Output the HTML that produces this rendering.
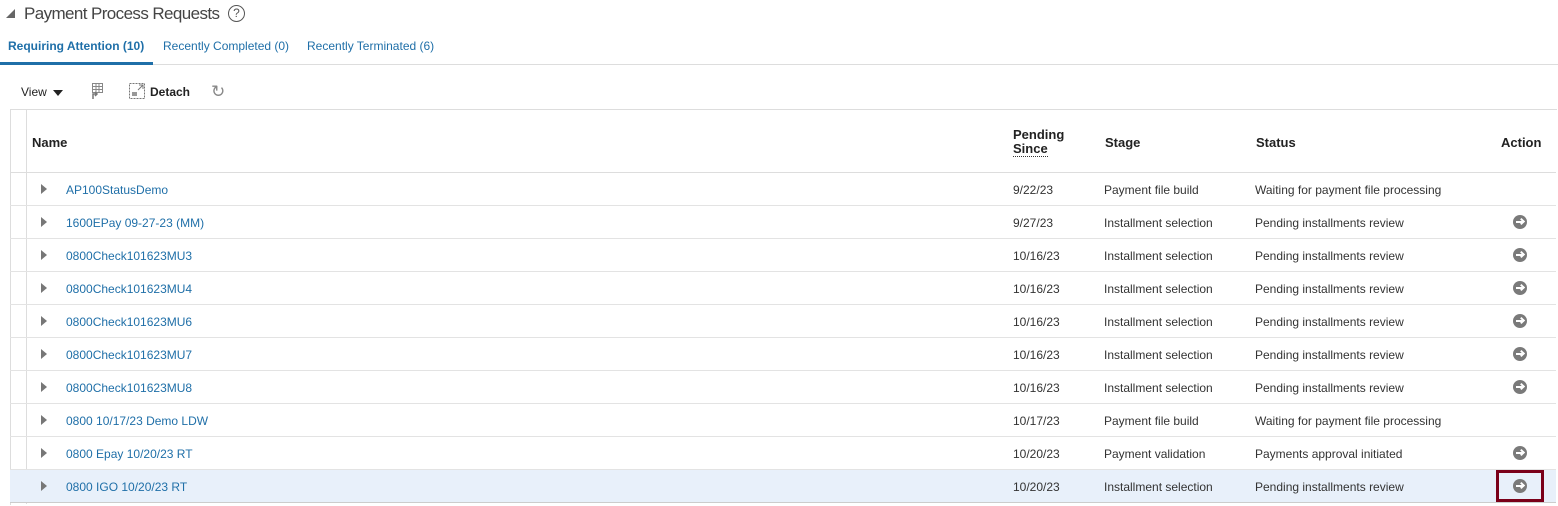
<!DOCTYPE html>
<html><head><style>
body{margin:0;width:1558px;height:506px;background:#fff;font-family:"Liberation Sans",Arial,sans-serif;position:relative;overflow:hidden;color:#333}
.a{position:absolute;white-space:nowrap}
.title{left:24px;top:4px;font-size:17px;letter-spacing:-0.6px;color:#444}
.tab{top:39px;font-size:12px;color:#1f6fa8}
.row{position:absolute;left:10px;width:1546px;height:32px;border-bottom:1px solid #e3e3e3;font-size:12px;color:#333}
.row span{position:absolute;top:10px;white-space:nowrap}
.row .n{left:56px;color:#1f6fa8}
.row .t{left:31px;top:11px;width:0;height:0;border-left:6px solid #777;border-top:5px solid transparent;border-bottom:5px solid transparent}
.row .d{left:1003px}.row .s{left:1094px}.row .st{left:1245px}
.ic{position:absolute;left:1503px;top:9px;width:14px;height:14px;border-radius:50%;background:#7a7a7a}
.ic:after{content:"";position:absolute;left:3px;top:6px;width:6px;height:2px;background:#fff}
.ic:before{content:"";position:absolute;left:6px;top:4px;width:3px;height:3px;border-right:2px solid #fff;border-top:2px solid #fff;transform:rotate(45deg)}
.h{font-size:13px;font-weight:bold;color:#222}
</style></head><body>
<div class="a" style="left:6px;top:9px;width:0;height:0;border-right:9px solid #666;border-top:9px solid transparent"></div>
<div class="a title">Payment Process Requests</div>
<div class="a" style="left:228px;top:5px;width:15px;height:15px;border:1.5px solid #555;border-radius:50%;font-size:12px;text-align:center;line-height:15px;color:#555">?</div>
<div class="a tab" style="left:8px;font-weight:bold">Requiring Attention (10)</div>
<div class="a tab" style="left:163px">Recently Completed (0)</div>
<div class="a tab" style="left:307px">Recently Terminated (6)</div>
<div class="a" style="left:0;top:64px;width:1558px;height:1px;background:#ddd"></div>
<div class="a" style="left:0;top:62px;width:153px;height:3px;background:#1f6fa8"></div>
<div class="a" style="left:21px;top:85px;font-size:12px;color:#222">View</div>
<div class="a" style="left:53px;top:90px;border-top:6px solid #222;border-left:5px solid transparent;border-right:5px solid transparent"></div>
<svg class="a" style="left:88px;top:83px" width="16" height="18" viewBox="0 0 16 18" fill="none" stroke="#888" stroke-width="1"><rect x="4.5" y="0.5" width="10" height="9"/><path d="M4.5 3.5h10M4.5 6.5h10M8 0.5v9M11 0.5v9"/><path d="M5 16 V11 H9 M7 9 L9 11 L7 13" stroke="#777" stroke-width="1.5"/></svg>
<svg class="a" style="left:129px;top:83px" width="16" height="16" viewBox="0 0 16 16" fill="none" stroke="#777" stroke-dasharray="2 1"><rect x="0.5" y="0.5" width="15" height="15"/><path d="M9 7 L14 2 M10 2h4v4" stroke-dasharray="none"/><rect x="3" y="9" width="5" height="4" fill="#999" stroke="none"/></svg>
<div class="a" style="left:150px;top:85px;font-size:12px;font-weight:bold;color:#222">Detach</div>
<div class="a" style="left:211px;top:82px;font-size:17px;color:#888">↻</div>
<div class="a" style="left:10px;top:109px;width:1546px;height:395px;border-top:1px solid #ddd;border-left:1px solid #ddd"></div>
<div class="a" style="left:26px;top:109px;width:1px;height:395px;background:#ddd"></div>
<div class="a" style="left:10px;top:172px;width:1546px;height:1px;background:#ddd"></div>
<div class="a h" style="left:32px;top:135px">Name</div>
<div class="a h" style="left:1013px;top:128px;line-height:14px">Pending<br><span style="border-bottom:1px dotted #333">Since</span></div>
<div class="a h" style="left:1105px;top:135px">Stage</div>
<div class="a h" style="left:1256px;top:135px">Status</div>
<div class="a h" style="left:1501px;top:135px">Action</div>

<div class="row" style="top:173px"><i class="t" style="position:absolute"></i><span class="n">AP100StatusDemo</span><span class="d">9/22/23</span><span class="s">Payment file build</span><span class="st">Waiting for payment file processing</span></div>
<div class="row" style="top:206px"><i class="t" style="position:absolute"></i><span class="n">1600EPay 09-27-23 (MM)</span><span class="d">9/27/23</span><span class="s">Installment selection</span><span class="st">Pending installments review</span><i class="ic"></i></div>
<div class="row" style="top:239px"><i class="t" style="position:absolute"></i><span class="n">0800Check101623MU3</span><span class="d">10/16/23</span><span class="s">Installment selection</span><span class="st">Pending installments review</span><i class="ic"></i></div>
<div class="row" style="top:272px"><i class="t" style="position:absolute"></i><span class="n">0800Check101623MU4</span><span class="d">10/16/23</span><span class="s">Installment selection</span><span class="st">Pending installments review</span><i class="ic"></i></div>
<div class="row" style="top:305px"><i class="t" style="position:absolute"></i><span class="n">0800Check101623MU6</span><span class="d">10/16/23</span><span class="s">Installment selection</span><span class="st">Pending installments review</span><i class="ic"></i></div>
<div class="row" style="top:338px"><i class="t" style="position:absolute"></i><span class="n">0800Check101623MU7</span><span class="d">10/16/23</span><span class="s">Installment selection</span><span class="st">Pending installments review</span><i class="ic"></i></div>
<div class="row" style="top:371px"><i class="t" style="position:absolute"></i><span class="n">0800Check101623MU8</span><span class="d">10/16/23</span><span class="s">Installment selection</span><span class="st">Pending installments review</span><i class="ic"></i></div>
<div class="row" style="top:404px"><i class="t" style="position:absolute"></i><span class="n">0800 10/17/23 Demo LDW</span><span class="d">10/17/23</span><span class="s">Payment file build</span><span class="st">Waiting for payment file processing</span></div>
<div class="row" style="top:437px"><i class="t" style="position:absolute"></i><span class="n">0800 Epay 10/20/23 RT</span><span class="d">10/20/23</span><span class="s">Payment validation</span><span class="st">Payments approval initiated</span><i class="ic"></i></div>
<div class="row" style="top:470px;background:#e8f0fa;border-bottom-color:#ccc"><i class="t" style="position:absolute"></i><span class="n">0800 IGO 10/20/23 RT</span><span class="d">10/20/23</span><span class="s">Installment selection</span><span class="st">Pending installments review</span><i class="ic"></i></div>
<div class="a" style="left:1496px;top:470px;width:42px;height:26px;border:3px solid #7a0019"></div>
</body></html>
